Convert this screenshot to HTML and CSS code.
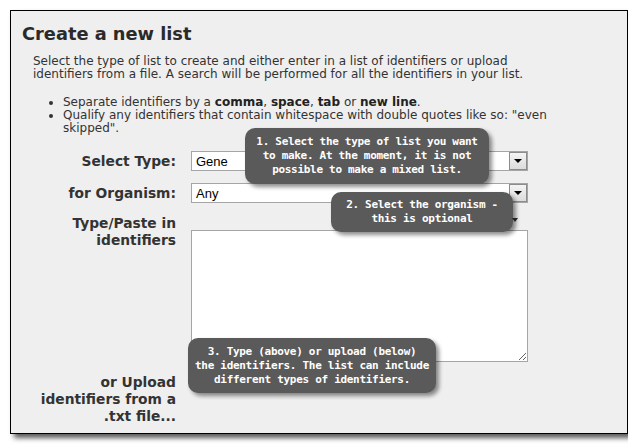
FILE: index.html
```html
<!DOCTYPE html>
<html>
<head>
<meta charset="utf-8">
<link rel="stylesheet" href="styles.css">
</head>
<body>
<div class="panel">
  <h1 class="title">Create a new list</h1>
  <div class="intro">
    <p class="lead">Select the type of list to create and either enter in a list of identifiers or upload identifiers from a file. A search will be performed for all the identifiers in your list.</p>
    <ul class="rules">
      <li>Separate identifiers by a <b>comma</b>, <b>space</b>, <b>tab</b> or <b>new line</b>.</li>
      <li>Qualify any identifiers that contain whitespace with double quotes like so: "even skipped".</li>
    </ul>
  </div>
  <div class="form">
    <label class="lbl">Select Type:</label>
    <div class="sel"><span class="sel-text">Gene</span><span class="sel-btn"><span class="tri"></span></span></div>
    <label class="lbl">for Organism:</label>
    <div class="sel"><span class="sel-text">Any</span><span class="sel-btn"><span class="tri"></span></span></div>
    <label class="lbl lbl-top">Type/Paste in<br>identifiers</label>
    <textarea class="ids"></textarea>
    <label class="lbl lbl-top">or Upload<br>identifiers from a<br>.txt file...</label>
    <div></div>
  </div>
  <div class="tip tip1">1. Select the type of list you want<br>to make. At the moment, it is not<br>possible to make a mixed list.</div>
  <div class="tip tip2">2. Select the organism -<br>this is optional</div>
  <div class="tip tip3">3. Type (above) or upload (below)<br>the identifiers. The list can include<br>different types of identifiers.</div>
</div>
</body>
</html>
```
FILE: styles.css
```css
html, body {
  margin: 0;
  padding: 0;
  background: #ffffff;
}
body {
  padding: 10px;
  font-family: "DejaVu Sans", Verdana, sans-serif;
  color: #333333;
}
.panel {
  position: relative;
  width: 594px;
  height: 410px;
  padding: 12px 11px 0 11px;
  border: 1px solid #000000;
  background: #efefef;
  box-shadow: 4px 4px 5px rgba(0, 0, 0, 0.65);
  overflow: visible;
}
.title {
  margin: 0;
  font-size: 17.8px;
  line-height: 22px;
  font-weight: bold;
  color: #2a2a2a;
}
.intro {
  margin: 0 54px 0 11px;
  font-size: 12px;
}
.lead {
  margin: 10px 0 0 0;
  line-height: 13px;
}
.rules {
  margin: 15px 0 0 0;
  padding-left: 30px;
  line-height: 13px;
}
.rules b {
  color: #222;
}
.form {
  display: grid;
  grid-template-columns: 143px 337px;
  column-gap: 15px;
  row-gap: 12px;
  align-items: center;
  margin: 16px 0 0 11px;
}
.lbl {
  text-align: right;
  font-size: 13.8px;
  line-height: 17px;
  font-weight: bold;
  color: #333;
}
.lbl-top {
  align-self: start;
}
.sel {
  position: relative;
  height: 18px;
  border: 1px solid #a5a5a5;
  background: #ffffff;
  display: flex;
  align-items: center;
}
.sel-text {
  padding-left: 4px;
  font-family: "Liberation Sans", Arial, sans-serif;
  font-size: 13px;
  color: #000;
}
.sel-btn {
  position: absolute;
  right: 0;
  top: 0;
  width: 16px;
  height: 16px;
  border: 1px solid #8c8c8c;
  background: linear-gradient(#f4f4f4, #dcdcdc);
  display: flex;
  align-items: center;
  justify-content: center;
}
.tri {
  width: 0;
  height: 0;
  border-left: 4px solid transparent;
  border-right: 4px solid transparent;
  border-top: 4px solid #000;
}
.ids {
  display: block;
  box-sizing: border-box;
  width: 337px;
  height: 132px;
  margin: 15px 0 0 0;
  border: 1px solid #a5a5a5;
  background: #fff;
  resize: both;
}
.tip {
  position: absolute;
  background: #5a5a5a;
  color: #ffffff;
  border-radius: 10px;
  box-shadow: 3px 3px 4px rgba(0, 0, 0, 0.45);
  font-family: "DejaVu Sans Mono", monospace;
  font-weight: bold;
  font-size: 11px;
  letter-spacing: -0.3px;
  line-height: 14px;
  text-align: center;
  box-sizing: border-box;
}
.tip1 {
  left: 234px;
  top: 117px;
  width: 244px;
  height: 56px;
  padding-top: 7px;
}
.tip2 {
  left: 320px;
  top: 181px;
  width: 182px;
  height: 40px;
  padding-top: 6px;
}
.tip2::after {
  content: "";
  position: absolute;
  right: -5px;
  top: 26px;
  border-left: 3px solid transparent;
  border-right: 3px solid transparent;
  border-top: 4px solid #222;
}
.tip3 {
  left: 177px;
  top: 327px;
  width: 248px;
  height: 55px;
  padding-top: 7px;
}
```
